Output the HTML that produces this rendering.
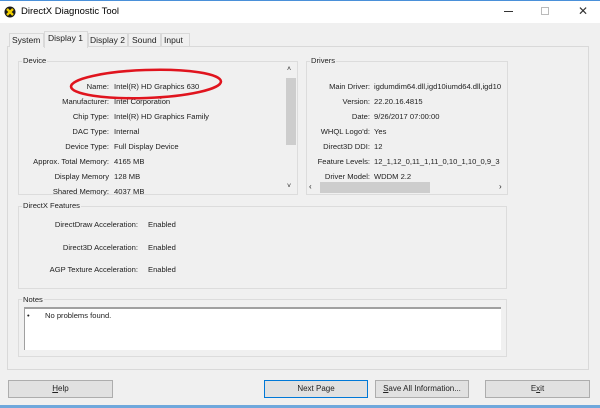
<!DOCTYPE html>
<html><head><style>
*{margin:0;padding:0;box-sizing:border-box}
body{width:600px;height:408px;background:#f0f0f0;font-family:"Liberation Sans",sans-serif;font-size:7.6px;color:#222;position:relative;overflow:hidden}
.a{position:absolute}
.t{position:absolute;white-space:nowrap}
.g{position:absolute;border:1px solid #dcdcdc}
.btn{position:absolute;border:1px solid #adadad;background:#e1e1e1;text-align:center;line-height:16px;font-size:8px}
.r{text-align:right}
</style></head><body>
<div class="a" style="left:0;top:0;width:600px;height:23px;background:#fff;border-top:1px solid #4a90d9"></div>
<svg class="a" style="left:4px;top:6px" width="12" height="12"><circle cx="6" cy="6" r="5.5" fill="#1a1a1a"/><path d="M3 3L9 9M9 3L3 9" stroke="#f2d000" stroke-width="2.4"/></svg>
<div class="t" style="left:21px;top:6px;font-size:9.5px;color:#000">DirectX Diagnostic Tool</div>
<div class="a" style="left:504px;top:11px;width:9px;height:1px;background:#333"></div>
<div class="a" style="left:541px;top:7px;width:8px;height:8px;border:1px solid #bbb"></div>
<div class="t" style="left:578px;top:4px;font-size:12px;color:#333">✕</div>
<div class="a" style="left:7px;top:46px;width:582px;height:324px;border:1px solid #d9d9d9;background:#f0f0f0"></div>
<div class="a" style="left:9px;top:33px;width:35px;height:14px;border:1px solid #d9d9d9;border-bottom:none;background:#f0f0f0"></div><div class="t" style="left:12px;top:35px;font-size:8.5px">System</div>
<div class="a" style="left:88px;top:33px;width:40px;height:14px;border:1px solid #d9d9d9;border-bottom:none"></div><div class="t" style="left:90px;top:35px;font-size:8.5px">Display 2</div>
<div class="a" style="left:128px;top:33px;width:33px;height:14px;border:1px solid #d9d9d9;border-bottom:none"></div><div class="t" style="left:132px;top:35px;font-size:8.5px">Sound</div>
<div class="a" style="left:161px;top:33px;width:29px;height:14px;border:1px solid #d9d9d9;border-bottom:none"></div><div class="t" style="left:164px;top:35px;font-size:8.5px">Input</div>
<div class="a" style="left:44px;top:31px;width:44px;height:17px;border:1px solid #d9d9d9;border-bottom:none;background:#f0f0f0"></div><div class="t" style="left:48px;top:33px;font-size:8.5px">Display 1</div>

<div class="g" style="left:18px;top:61px;width:280px;height:134px"></div>
<div class="t" style="left:22px;top:56px;background:#f0f0f0;padding:0 1px">Device</div>
<div class="a" style="left:285px;top:65px;width:12px;height:128px;background:#f0f0f0"></div>
<div class="a" style="left:286px;top:78px;width:10px;height:67px;background:#cdcdcd"></div>
<div class="t" style="left:287px;top:66px;font-size:7px">˄</div>
<div class="t" style="left:287px;top:183px;font-size:7px">˅</div>
<div class="a r" style="left:0;top:79px;width:109px;line-height:15px"><div>Name:</div><div>Manufacturer:</div><div>Chip Type:</div><div>DAC Type:</div><div>Device Type:</div><div>Approx. Total Memory:</div><div>Display Memory</div><div>Shared Memory:</div></div>
<div class="a" style="left:114px;top:79px;line-height:15px;white-space:nowrap"><div>Intel(R) HD Graphics 630</div><div>Intel Corporation</div><div>Intel(R) HD Graphics Family</div><div>Internal</div><div>Full Display Device</div><div>4165 MB</div><div>128 MB</div><div>4037 MB</div></div>
<svg class="a" style="left:0;top:0" width="300" height="120"><ellipse cx="146" cy="84" rx="75" ry="14" fill="none" stroke="#e0141e" stroke-width="2.6" transform="rotate(-2 146 84)"/></svg>

<div class="g" style="left:306px;top:61px;width:202px;height:134px"></div>
<div class="t" style="left:310px;top:56px;background:#f0f0f0;padding:0 1px">Drivers</div>
<div class="a" style="left:307px;top:79px;width:200px;height:100px;overflow:hidden">
<div class="a r" style="left:0;top:0;width:63px;line-height:15px;white-space:nowrap"><div>Main Driver:</div><div>Version:</div><div>Date:</div><div>WHQL Logo'd:</div><div>Direct3D DDI:</div><div>Feature Levels:</div><div>Driver Model:</div></div>
<div class="a" style="left:67px;top:0;line-height:15px;white-space:nowrap"><div>igdumdim64.dll,igd10iumd64.dll,igd10</div><div>22.20.16.4815</div><div>9/26/2017 07:00:00</div><div>Yes</div><div>12</div><div>12_1,12_0,11_1,11_0,10_1,10_0,9_3</div><div>WDDM 2.2</div></div></div>
<div class="a" style="left:307px;top:181px;width:200px;height:13px;background:#f0f0f0"></div>
<div class="a" style="left:320px;top:182px;width:110px;height:11px;background:#cdcdcd"></div>
<div class="t" style="left:309px;top:182px;font-size:8px">‹</div><div class="t" style="left:499px;top:182px;font-size:8px">›</div>

<div class="g" style="left:18px;top:206px;width:489px;height:83px"></div>
<div class="t" style="left:22px;top:201px;background:#f0f0f0;padding:0 1px">DirectX Features</div>
<div class="a r" style="left:0;top:214px;width:138px;line-height:22.5px"><div>DirectDraw Acceleration:</div><div>Direct3D Acceleration:</div><div>AGP Texture Acceleration:</div></div>
<div class="a" style="left:148px;top:214px;line-height:22.5px"><div>Enabled</div><div>Enabled</div><div>Enabled</div></div>

<div class="g" style="left:18px;top:299px;width:489px;height:58px"></div>
<div class="t" style="left:22px;top:295px;background:#f0f0f0;padding:0 1px">Notes</div>
<div class="a" style="left:24px;top:307px;width:477px;height:43px;background:#fff;border-top:2px solid #a0a0a0;border-left:1px solid #a0a0a0"></div>
<div class="t" style="left:27px;top:311px">•</div><div class="t" style="left:45px;top:311px">No problems found.</div>

<div class="btn" style="left:8px;top:380px;width:105px;height:18px"><u>H</u>elp</div>
<div class="btn" style="left:264px;top:380px;width:104px;height:18px;border-color:#0078d7">Next Page</div>
<div class="btn" style="left:375px;top:380px;width:94px;height:18px"><u>S</u>ave All Information...</div>
<div class="btn" style="left:485px;top:380px;width:105px;height:18px">E<u>x</u>it</div>
<div class="a" style="left:0;top:405px;width:600px;height:3px;background:#6fa8dc"></div>
</body></html>
